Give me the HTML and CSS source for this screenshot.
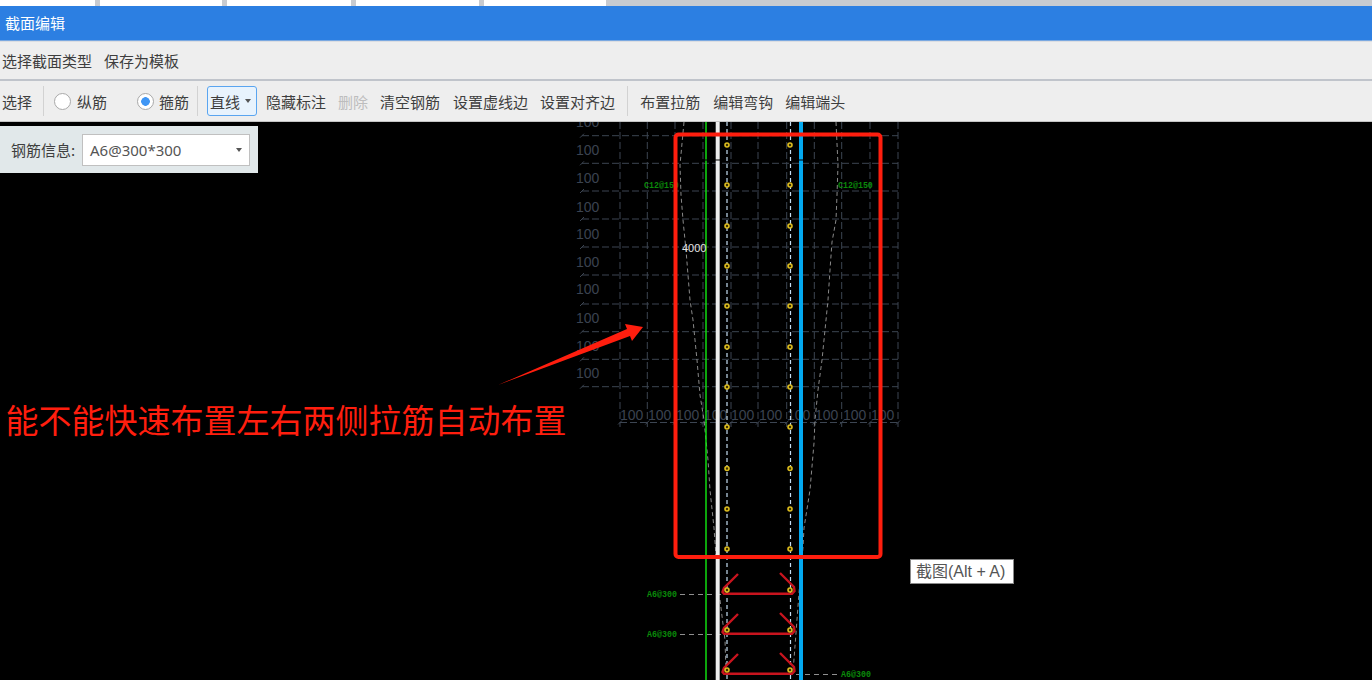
FILE: index.html
```html
<!DOCTYPE html>
<html lang="zh-CN">
<head>
<meta charset="utf-8">
<title>截面编辑</title>
<link rel="stylesheet" href="styles.css">
</head>
<body>
<div class="page">
  <div class="tabs">
    <div class="tab tab-1"></div>
    <div class="tab tab-2"></div>
    <div class="tab tab-3"></div>
    <div class="tab tab-4"></div>
    <div class="tab tab-5"></div>
  </div>
  <header class="title">截面编辑</header>
  <nav class="bar bar-top">
    <span>选择截面类型</span>
    <span>保存为模板</span>
  </nav>
  <nav class="bar bar-tools">
    <span>选择</span>
    <i class="sep sep-a"></i>
    <label class="radio-item"><i class="radio"></i><span>纵筋</span></label>
    <label class="radio-item radio-second"><i class="radio radio-on"></i><span>箍筋</span></label>
    <i class="sep sep-b"></i>
    <button class="line-btn">直线<i class="caret"></i></button>
    <span class="t-hide">隐藏标注</span>
    <span class="disabled">删除</span>
    <span>清空钢筋</span>
    <span class="t-dash">设置虚线边</span>
    <span>设置对齐边</span>
    <i class="sep sep-c"></i>
    <span>布置拉筋</span>
    <span class="t-hook">编辑弯钩</span>
    <span>编辑端头</span>
  </nav>
  <main class="canvas">
    <svg class="drawing" width="1372" height="558" viewBox="0 122 1372 558" xmlns="http://www.w3.org/2000/svg">
      <defs>
        <g id="dot"><circle r="2" class="dot"/></g>
        <g id="hook">
          <path class="hook" d="M738 574 724 588 722.5 592 724 593.7H792L794.5 591 794 587 780 573"/>
        </g>
      </defs>

      <path class="grid" d="M582 135.7H898M582 163.3H898M582 191H898M582 219H898M582 247H898M582 275H898M582 304H898M582 331.7H898M582 359.3H898M582 386.7H898M620 422.5H898"/>
      <path class="grid" d="M620 122V427M647.3 122V427M675 122V427M703 122V427M731 122V427M758 122V427M786.7 122V427M814.3 122V427M841.7 122V427M870 122V427M898 122V427"/>
      <path class="tick" d="M580 137.7 584 133.7M580 165.3 584 161.3M580 193 584 189M580 221 584 217M580 249 584 245M580 277 584 273M580 306 584 302M580 333.7 584 329.7M580 361.3 584 357.3M580 388.7 584 384.7M618 424.5 622 420.5M645.3 424.5 649.3 420.5M673 424.5 677 420.5M701 424.5 705 420.5M729 424.5 733 420.5M756 424.5 760 420.5M784.7 424.5 788.7 420.5M812.3 424.5 816.3 420.5M839.7 424.5 843.7 420.5M868 424.5 872 420.5M896 424.5 900 420.5"/>

      <g class="dim">
        <text x="576" y="127">100</text><text x="576" y="155">100</text><text x="576" y="183">100</text><text x="576" y="212">100</text><text x="576" y="239">100</text><text x="576" y="267">100</text><text x="576" y="294">100</text><text x="576" y="323">100</text><text x="576" y="351">100</text><text x="576" y="378">100</text>
        <text x="620" y="420">100</text><text x="648" y="420">100</text><text x="676" y="420">100</text><text x="704" y="420">100</text><text x="731" y="420">100</text><text x="759" y="420">100</text><text x="787" y="420">100</text><text x="815" y="420">100</text><text x="843" y="420">100</text><text x="871" y="420">100</text>
      </g>

      <path class="taper" d="M684 122 680 165 681 195 683 220 686 250 688 275 690 300 693 320 697 360 700 395 704 420 706 440 708 460 710 490 714 528 716 556M836 122 838 165 837 195 836 220 832 242 830 270 828 300 825 330 822 360 818 390 815 420 814 443 810 490 804 528 803 547 799 593 796 633 793 672M720 600 725 640 726 672"/>

      <path class="leader" d="M680 594.5H760M680 634.5H760M760 674.5H838"/>

      <path class="bar-green" d="M706 122V680"/>
      <path class="bar-white" d="M717.7 122V680"/>
      <path class="bar-blue" d="M801 122V680"/>
      <path class="notch" d="M704 160H708M715 160H721M799 160H803"/>
      <path class="rebar" d="M727 122V680M790.5 122V680"/>

      <use href="#hook"/>
      <use href="#hook" y="40"/>
      <use href="#hook" y="80"/>

      <use href="#dot" x="727" y="145"/><use href="#dot" x="790" y="145"/>
      <use href="#dot" x="727" y="185"/><use href="#dot" x="790" y="185"/>
      <use href="#dot" x="727" y="226"/><use href="#dot" x="790" y="226"/>
      <use href="#dot" x="727" y="266"/><use href="#dot" x="790" y="266"/>
      <use href="#dot" x="727" y="306"/><use href="#dot" x="790" y="306"/>
      <use href="#dot" x="727" y="347"/><use href="#dot" x="790" y="347"/>
      <use href="#dot" x="727" y="387"/><use href="#dot" x="790" y="387"/>
      <use href="#dot" x="727" y="427"/><use href="#dot" x="790" y="427"/>
      <use href="#dot" x="727" y="468.5"/><use href="#dot" x="790" y="468.5"/>
      <use href="#dot" x="727" y="509"/><use href="#dot" x="790" y="509"/>
      <use href="#dot" x="727" y="549"/><use href="#dot" x="790" y="549"/>
      <use href="#dot" x="727" y="590"/><use href="#dot" x="790" y="590"/>
      <use href="#dot" x="727" y="630"/><use href="#dot" x="790" y="630"/>
      <use href="#dot" x="727" y="670"/><use href="#dot" x="790" y="670"/>

      <g class="green-label">
        <text x="644" y="188">C12@150</text>
        <text x="838" y="188">C12@150</text>
        <text x="647" y="597">A6@300</text>
        <text x="647" y="637">A6@300</text>
        <text x="841" y="677">A6@300</text>
      </g>
      <text class="length" x="682" y="252">4000</text>

      <rect class="mark-box" x="675.5" y="134.5" width="205" height="422.5" rx="3"/>
      <polygon class="mark-arrow" points="498,385 627,329 625,324 643,327 632,341 630,336"/>
    </svg>

    <div class="rebar-panel">
      <span class="rebar-label">钢筋信息:</span>
      <div class="select"><span>A6@300*300</span><i class="caret"></i></div>
    </div>
    <p class="note">能不能快速布置左右两侧拉筋自动布置</p>
    <div class="tip">截图(Alt + A)</div>
  </main>
</div>
</body>
</html>
```
FILE: styles.css
```css
* { box-sizing: border-box; }
html, body { margin: 0; height: 100%; overflow: hidden; background: #000; }
body { font-family: "Noto Sans CJK SC", "Noto Sans", sans-serif; }
.page { width: 1372px; height: 680px; display: flex; flex-direction: column; }

.tabs { height: 6px; background: #c8cbd0; display: flex; gap: 5px; flex: none; }
.tab { background: #fff; height: 6px; }
.tab-1 { width: 95px; }
.tab-2 { width: 122px; }
.tab-3 { width: 124px; }
.tab-4 { width: 123px; }
.tab-5 { width: 122px; }

.title { height: 35px; flex: none; background: #2c7fe2; border-bottom: 1px solid #7aa8e0; color: #fff; font-size: 15px; line-height: 33px; padding-left: 5px; }

.bar { background: #eee; color: #3e3e3e; font-size: 15px; display: flex; align-items: center; flex: none; padding-left: 2px; }
.bar-top { height: 40px; gap: 12px; border-top: 1px solid #dcdee2; border-bottom: 2px solid #c0c4cb; }
.bar-tools { height: 41px; gap: 12px; border-bottom: 1px solid #c4c4c4; }

.sep { width: 1px; height: 30px; background: #d2d2d2; flex: none; }
.sep-a { margin: 0 -2px 0 -1px; }
.sep-b { margin: 0 -3px 0 -4px; }
.sep-c { margin: 0; }

.radio-item { display: flex; align-items: center; gap: 5px; color: #3e3e3e; }
.radio-second { margin-left: 18px; }
.radio-item:first-of-type { gap: 6px; }
.radio { width: 17px; height: 17px; border-radius: 50%; background: #fff; border: 1px solid #a9a9a9; flex: none; display: block; }
.radio-on { background: radial-gradient(circle, #3f96f5 0 4px, #fff 4.6px); }

.line-btn { width: 50px; height: 30px; border: 1px solid #5aa5f0; border-radius: 3px; background: #e8f3fd; color: #3e3e3e; font: inherit; padding: 0 0 0 2px; display: flex; align-items: center; gap: 5px; margin-right: -3px; }
.caret { width: 0; height: 0; border: 3.5px solid transparent; border-top: 4px solid #555; border-bottom: 0; display: block; flex: none; }

.disabled { color: #bdbdbd; }
.t-dash { margin-left: 1px; }
.t-hook { margin-left: 1px; }

.canvas { position: relative; flex: 1; background: #000; overflow: hidden; }
.drawing { display: block; }
.grid { fill: none; stroke: #3c4552; stroke-width: 1; stroke-dasharray: 7 3; }
.tick { fill: none; stroke: #3c4552; stroke-width: 1; }
.dim text { font-family: "Liberation Sans", sans-serif; font-size: 14px; fill: #3b4350; }
.taper { fill: none; stroke: #8a8a8a; stroke-width: 1; stroke-dasharray: 4 3; }
.leader { fill: none; stroke: #8f8f8f; stroke-width: 1; stroke-dasharray: 5 4; }
.bar-green { stroke: #10dc10; stroke-width: 1.5; }
.bar-white { stroke: #eeeeee; stroke-width: 4; }
.bar-blue { stroke: #03a9f0; stroke-width: 4; }
.notch { stroke: #000; stroke-width: 1; }
.rebar { stroke: #c4dcf0; stroke-width: 1.2; stroke-dasharray: 4 3; }
.dot { fill: #3a3000; stroke: #dcbc1e; stroke-width: 1.6; }
.hook { fill: none; stroke: #c8141e; stroke-width: 2.4; }
.green-label text { font-family: "Liberation Mono", monospace; font-weight: 700; font-size: 8.3px; fill: #0a8a0a; }
.length { font-family: "Liberation Sans", sans-serif; font-size: 11px; fill: #e4e4e4; }
.mark-box { fill: none; stroke: #ff1e0e; stroke-width: 4; }
.mark-arrow { fill: #ff1e0e; }

.rebar-panel { position: absolute; left: 0; top: 4px; width: 258px; height: 47px; background: #e1e8ea; display: flex; align-items: center; padding-left: 11px; gap: 7px; }
.rebar-label { font-size: 15px; color: #3e3e3e; width: 64px; white-space: nowrap; }
.select { width: 168px; height: 32px; background: #fff; border: 1px solid #c0c0c0; display: flex; align-items: center; justify-content: space-between; padding: 0 7px; font-family: "Noto Sans", sans-serif; font-size: 15px; color: #555; }

.note { position: absolute; left: 5.5px; top: 274px; margin: 0; font-size: 33px; line-height: 46px; font-weight: 400; color: #ff1e0e; white-space: nowrap; }

.tip { position: absolute; left: 910px; top: 437px; width: 104px; height: 25px; background: #fff; border: 1px solid #8a8a8a; color: #555; font-family: "Liberation Sans", "Noto Sans CJK SC", sans-serif; font-size: 16px; line-height: 24px; padding-left: 5px; white-space: nowrap; }
```
